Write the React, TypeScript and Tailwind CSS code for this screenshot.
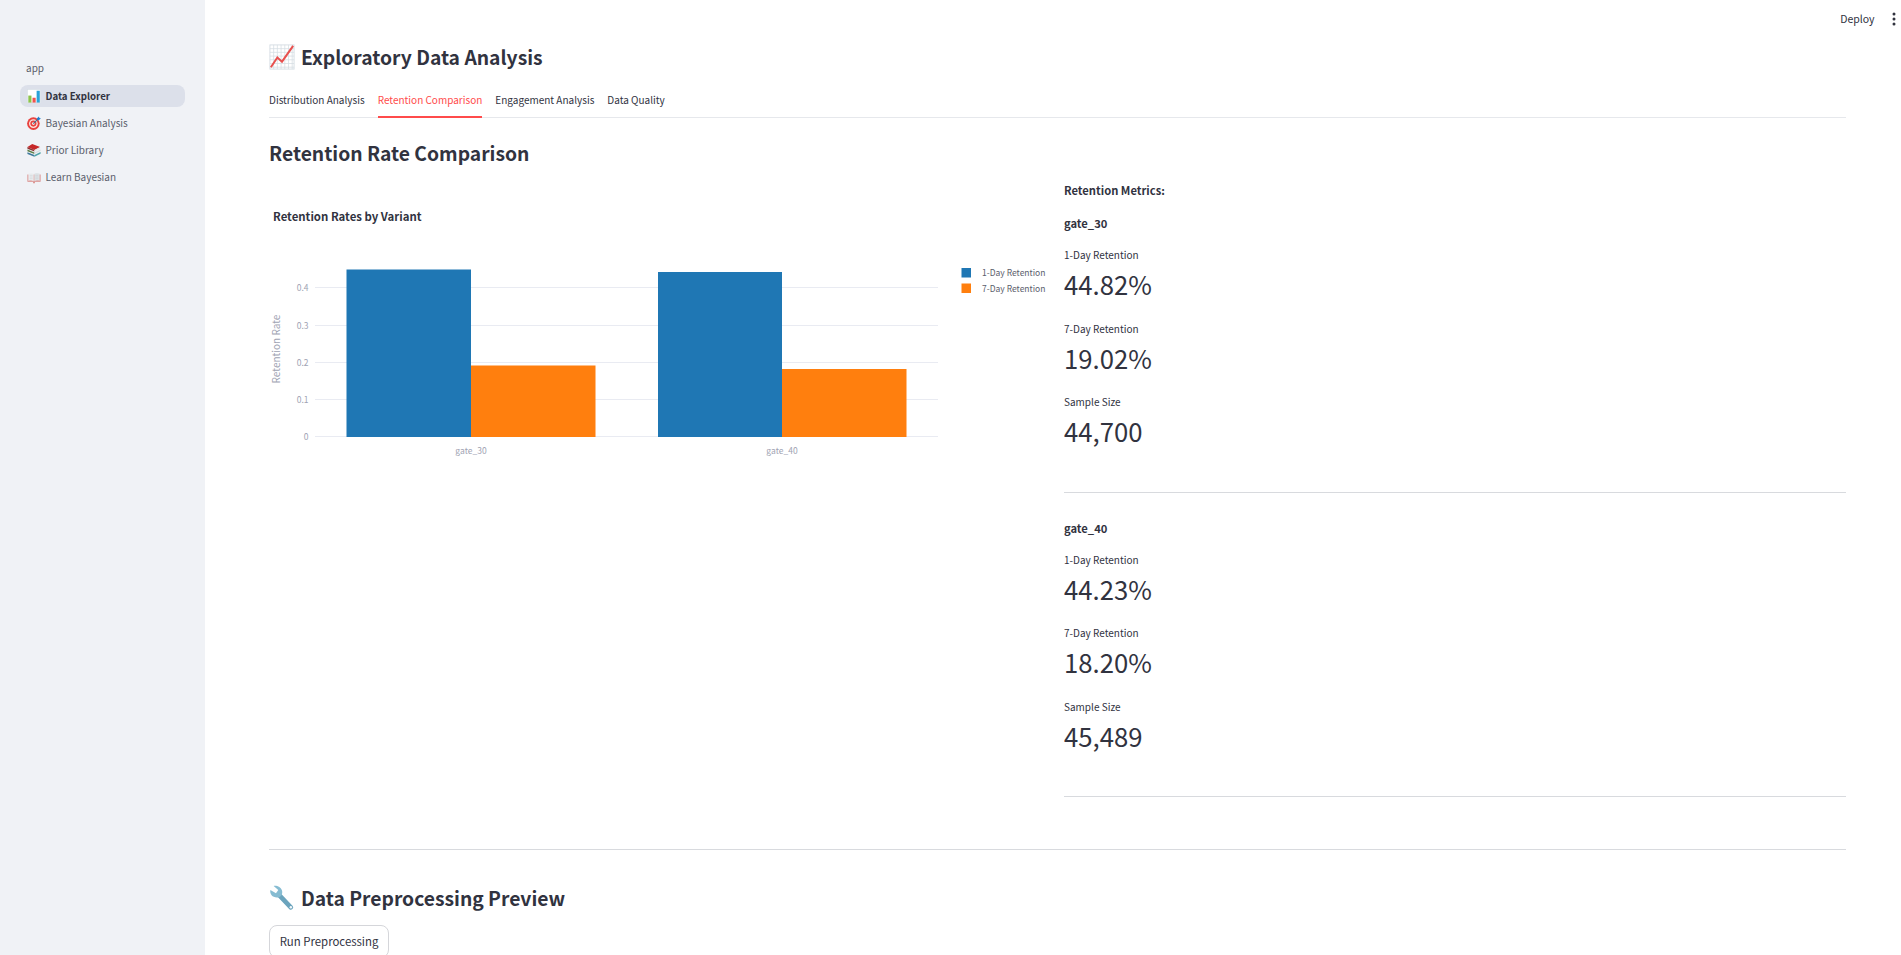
const font = { fontFamily: '"Noto Sans CJK SC", "Noto Sans", sans-serif' };

function BarChartEmoji() {
  return (
    <svg viewBox="0 0 16 16" className="w-[14px] h-[14px] shrink-0">
      <rect x="0.5" y="0.5" width="15" height="15" fill="#ffffff" stroke="#d5dde3" strokeWidth="0.7" />
      <rect x="1.5" y="7.5" width="3.6" height="8" fill="#8bc34a" />
      <rect x="6.3" y="10" width="3.6" height="5.5" fill="#ef5350" />
      <rect x="11" y="2" width="3.6" height="13.5" fill="#29a3d8" />
    </svg>
  );
}

function DartEmoji() {
  return (
    <svg viewBox="0 0 16 16" className="w-[14px] h-[14px] shrink-0">
      <circle cx="7.3" cy="8.7" r="7.2" fill="#e8413e" />
      <circle cx="7.3" cy="8.7" r="5" fill="#fbe3df" />
      <circle cx="7.3" cy="8.7" r="3.5" fill="#e8413e" />
      <circle cx="7.3" cy="8.7" r="1.6" fill="#fbe3df" />
      <path d="M7.3 8.7L13 3" stroke="#3f6f95" strokeWidth="1.2" />
      <path d="M11 3L13.5 0.5L14 2L15.8 2.5L13.3 5Z" fill="#1e7fd0" />
    </svg>
  );
}

function BooksEmoji() {
  return (
    <svg viewBox="0 0 16 16" className="w-[14px] h-[14px] shrink-0">
      <path d="M0.5 4.5L6 1L15 4.5L8.5 8Z" fill="#c62828" />
      <path d="M0.5 4.5L8.5 8V9.8L0.5 6.5Z" fill="#8d3030" />
      <path d="M8.5 8L15 4.5V6.3L8.5 9.8Z" fill="#e4e4e4" />
      <path d="M0.5 7.5L8.5 10.8V12.6L0.5 9.5Z" fill="#5d7f4a" />
      <path d="M8.5 10.8L15.5 7.3V9.1L8.5 12.6Z" fill="#d5dde0" />
      <path d="M0.5 10.5L8.5 13.8V15.8L0.5 12.7Z" fill="#3f7a9c" />
      <path d="M8.5 13.8L15.5 10.3V12.3L8.5 15.8Z" fill="#4fa3a8" />
    </svg>
  );
}

function BookEmoji() {
  return (
    <svg viewBox="0 0 16 16" className="w-[14px] h-[14px] shrink-0">
      <path d="M0.5 13.5V5H15.5V13.5H9V15H7V13.5Z" fill="#d98b88" />
      <path d="M1.5 4C4 3 6.5 3.2 7.7 4.2V13C6.5 12 4 11.8 1.5 12.6Z" fill="#eceff1" />
      <path d="M14.5 4C12 3 9.5 3.2 8.3 4.2V13C9.5 12 12 11.8 14.5 12.6Z" fill="#dfe4e7" />
      <path d="M3 6H6.5M3 8H6.5M3 10H6.5M9.5 6H13M9.5 8H13M9.5 10H13" stroke="#c2cad0" strokeWidth="0.6" />
    </svg>
  );
}

function ChartUpEmoji() {
  const lines = [5, 9, 13, 17, 21, 25];
  return (
    <svg viewBox="0 0 28 28" className="w-[26px] h-[26px] shrink-0">
      <rect x="1" y="1" width="26" height="26" fill="#ffffff" stroke="#d5dde3" strokeWidth="1" />
      {lines.map((n) => (
        <g key={n} stroke="#d5dde3" strokeWidth="0.8">
          <path d={`M${n} 1V27`} />
          <path d={`M1 ${n}H27`} />
        </g>
      ))}
      <path d="M2 25L9 14.5L14 19L26 2" fill="none" stroke="#e8514f" strokeWidth="2.2" />
    </svg>
  );
}

function WrenchEmoji() {
  return (
    <svg viewBox="0 0 28 28" className="w-[26px] h-[26px] shrink-0">
      <path d="M11 11L23.5 24" stroke="#6ba4bd" strokeWidth="5" strokeLinecap="round" />
      <path d="M1.5 5.5C0.5 10 4 14 9.5 13.5C13 13 15 10 14 6C13 2.5 9 0.5 5 1L10 5.5L7.5 9Z" fill="#86bcd2" />
      <circle cx="23.5" cy="24" r="1.3" fill="#f4f7f9" />
    </svg>
  );
}

const navItems = [
  { label: "Data Explorer", icon: <BarChartEmoji />, active: true },
  { label: "Bayesian Analysis", icon: <DartEmoji />, active: false },
  { label: "Prior Library", icon: <BooksEmoji />, active: false },
  { label: "Learn Bayesian", icon: <BookEmoji />, active: false },
];

function Sidebar() {
  return (
    <aside className="w-[205px] h-full shrink-0 bg-[#f0f2f6] pt-[60px] px-[20px]">
      <div className="pl-[6px] h-[16px] leading-[16px] text-[10px] text-[#5b5e6c]">app</div>
      <nav className="mt-[9px] flex flex-col gap-[5px]">
        {navItems.map((item) => (
          <div
            key={item.label}
            className={`h-[22px] rounded-[8px] pl-[7px] flex items-center gap-[4.5px] ${
              item.active ? "bg-[#dce0ea] text-[9.7px] font-semibold text-[#31333f]" : "text-[10px] text-[#5b5e6c]"
            }`}
          >
            {item.icon}
            <span className={item.active ? "" : "relative top-[-1px]"}>{item.label}</span>
          </div>
        ))}
      </nav>
    </aside>
  );
}

function Tabs() {
  const tabs = ["Distribution Analysis", "Retention Comparison", "Engagement Analysis", "Data Quality"];
  return (
    <div className="mt-[9px] flex gap-[13px] border-b border-[#e6e8ec] h-[34px]">
      {tabs.map((t) => (
        <div
          key={t}
          className={`h-[34px] leading-[32px] text-[10px] whitespace-nowrap ${
            t === "Retention Comparison" ? "text-[#ff4b4b] border-b-2 border-[#ff4b4b]" : "text-[#31333f]"
          }`}
        >
          {t}
        </div>
      ))}
    </div>
  );
}

function RetentionChart() {
  const grid = [
    { y: 436.5, label: "0" },
    { y: 399.5, label: "0.1" },
    { y: 362.5, label: "0.2" },
    { y: 325.5, label: "0.3" },
    { y: 287.5, label: "0.4" },
  ];
  const ox = 269;
  const oy = 198;
  return (
    <svg width="779" height="270" viewBox={`${ox} ${oy} 779 270`} className="block">
      {grid.map((g) => (
        <g key={g.label}>
          <line x1="315" x2="938" y1={g.y} y2={g.y} stroke="#e9ebf2" strokeWidth="1" />
          <text x="308.5" y={g.y + 3} textAnchor="end" fontSize="8.5" fill="#a0a3b3">
            {g.label}
          </text>
        </g>
      ))}
      <text x="273" y="221" fontSize="11.4" fontWeight="700" fill="#31333f">
        Retention Rates by Variant
      </text>
      <text transform="translate(280 349) rotate(-90)" textAnchor="middle" fontSize="10" fill="#a0a3b3">
        Retention Rate
      </text>
      <rect x="346.5" y="269.5" width="124.5" height="167.5" fill="#1f77b4" />
      <rect x="471" y="365.5" width="124.5" height="71.5" fill="#ff7f0e" />
      <rect x="658" y="272" width="124" height="165" fill="#1f77b4" />
      <rect x="782" y="369" width="124.5" height="68" fill="#ff7f0e" />
      <text x="471" y="453.5" textAnchor="middle" fontSize="8.5" fill="#a0a3b3">gate_30</text>
      <text x="782" y="453.5" textAnchor="middle" fontSize="8.5" fill="#a0a3b3">gate_40</text>
      <rect x="961.5" y="268" width="9.5" height="9.5" fill="#1f77b4" />
      <rect x="961.5" y="283.5" width="9.5" height="9.5" fill="#ff7f0e" />
      <text x="982" y="276" fontSize="8.5" fill="#5b5e6c">1-Day Retention</text>
      <text x="982" y="292" fontSize="8.5" fill="#5b5e6c">7-Day Retention</text>
    </svg>
  );
}

function Metric({ label, value }: { label: string; value: string }) {
  return (
    <div className="h-[72.7px]">
      <div className="h-[16px] mt-[1px] leading-[16px] text-[10px] text-[#31333f]">{label}</div>
      <div className="h-[42px] leading-[41px] text-[25.7px] text-[#31333f]">{value}</div>
    </div>
  );
}

function VariantMetrics({ name, d1, d7, size }: { name: string; d1: string; d7: string; size: string }) {
  return (
    <div className="h-[279.5px] border-b border-[#d8dade]">
      <div className="h-[20px] leading-[20px] text-[11.2px] font-semibold text-[#31333f]">{name}</div>
      <div className="mt-[14px]">
        <Metric label="1-Day Retention" value={d1} />
        <Metric label="7-Day Retention" value={d7} />
        <Metric label="Sample Size" value={size} />
      </div>
    </div>
  );
}

export default function App() {
  return (
    <div className="flex w-full h-screen overflow-hidden bg-white relative" style={font}>
      <Sidebar />
      <main className="flex-1 min-w-0 h-full overflow-hidden pl-[64px] pr-[55px] pt-[39px]">
        <div className="flex items-center gap-[6px] h-[36px]">
          <ChartUpEmoji />
          <h1 className="text-[19.3px] leading-[36px] font-semibold text-[#31333f]">Exploratory Data Analysis</h1>
        </div>
        <Tabs />
        <h2 className="mt-[19px] h-[32px] leading-[32px] text-[19.3px] font-semibold text-[#31333f]">
          Retention Rate Comparison
        </h2>
        <div className="mt-[7px] flex gap-[16px]">
          <div className="w-[779px] shrink-0 pt-[22px]">
            <RetentionChart />
          </div>
          <div className="flex-1 min-w-0">
            <div className="h-[20px] mt-[4px] leading-[20px] text-[11.2px] font-semibold text-[#31333f]">Retention Metrics:</div>
            <div className="mt-[13px] flex flex-col gap-[25px]">
              <VariantMetrics name="gate_30" d1="44.82%" d7="19.02%" size="44,700" />
              <VariantMetrics name="gate_40" d1="44.23%" d7="18.20%" size="45,489" />
            </div>
          </div>
        </div>
        <div className="mt-[52px] border-t border-[#d8dade]" />
        <div className="mt-[35px] flex items-center gap-[6px] h-[26px]">
          <WrenchEmoji />
          <h2 className="text-[19.3px] leading-[26px] font-semibold text-[#31333f]">Data Preprocessing Preview</h2>
        </div>
        <button className="mt-[14px] w-[120px] h-[33px] rounded-[8px] border border-[#d5d6da] bg-white text-[11.4px] text-[#31333f]">
          Run Preprocessing
        </button>
      </main>
      <div className="absolute top-[10px] right-0 h-[18px] flex items-center text-[10.5px] text-[#31333f]">
        <span>Deploy</span>
        <svg viewBox="0 0 4 14" className="w-[4px] h-[14px] ml-[17px] mr-[5.5px]" fill="#31333f">
          <circle cx="2" cy="2" r="1.5" />
          <circle cx="2" cy="7" r="1.5" />
          <circle cx="2" cy="12" r="1.5" />
        </svg>
      </div>
    </div>
  );
}
